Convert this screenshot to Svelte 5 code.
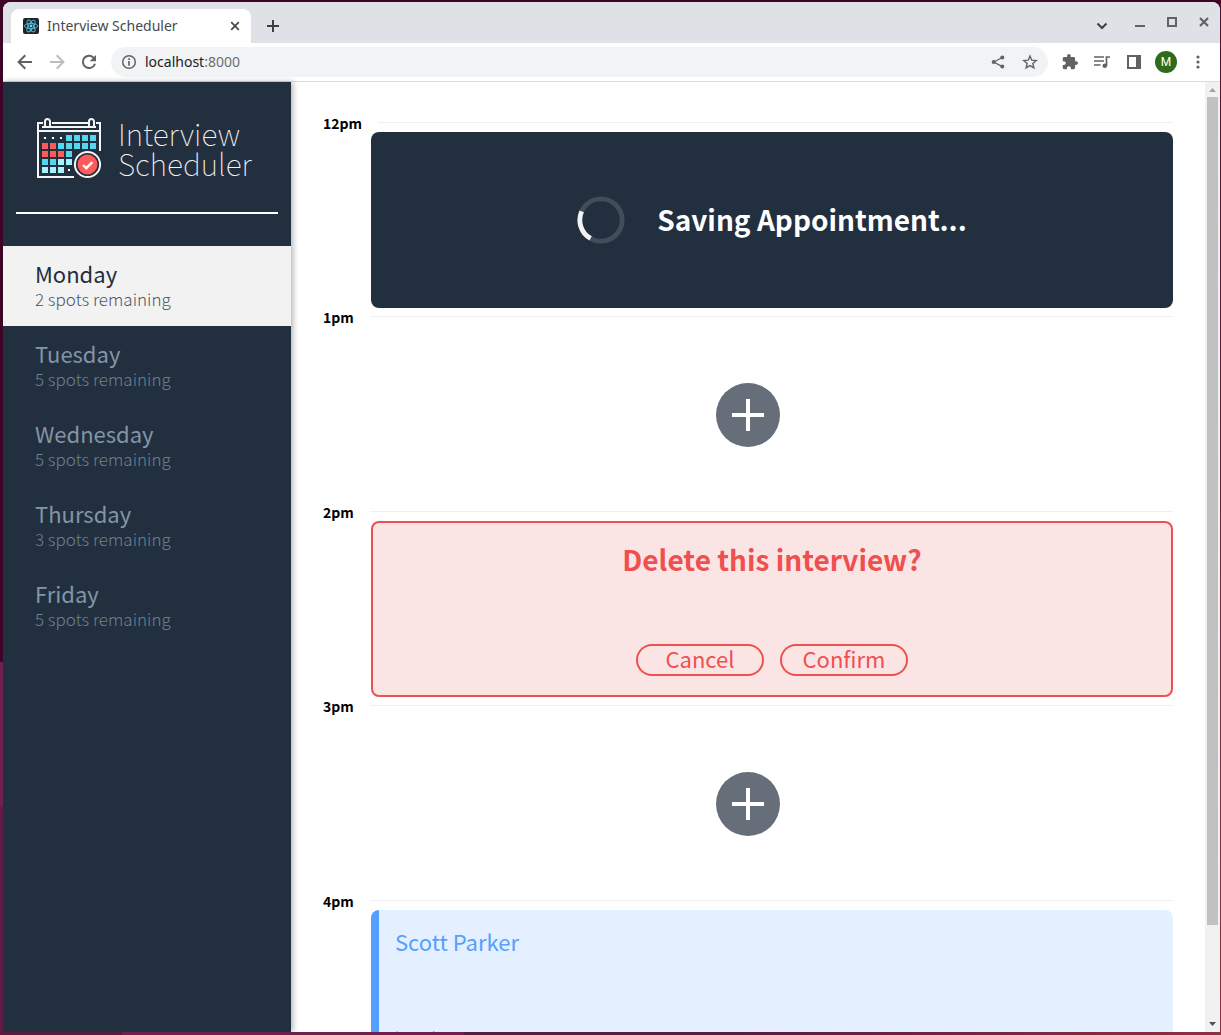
<script>
  const days = [
    { name: 'Monday', spots: 2, selected: true },
    { name: 'Tuesday', spots: 5 },
    { name: 'Wednesday', spots: 5 },
    { name: 'Thursday', spots: 3 },
    { name: 'Friday', spots: 5 }
  ];

  const slots = [
    { time: '12pm', mode: 'saving' },
    { time: '1pm', mode: 'empty' },
    { time: '2pm', mode: 'confirm' },
    { time: '3pm', mode: 'empty' },
    { time: '4pm', mode: 'show', student: 'Scott Parker' }
  ];

  // Calendar cells: w = dot, b = blue, r = red, l = light blue
  const calendar = ['wwwbbbb', 'rrbbbbb', 'rrrb', 'bbll', 'lllw'];
  const cells = calendar.flatMap((row, y) => [...row].map((kind, x) => ({ kind, x: 5 + x * 8, y: 17 + y * 8 })));
  const fills = { b: '#54d8f0', r: '#ff5a5a', l: '#a5f3fb' };
</script>

<div class="window">
  <header class="tabstrip">
    <div class="tab">
      <svg class="favicon" width="16" height="16" viewBox="0 0 16 16" aria-hidden="true">
        <rect width="16" height="16" rx="2" fill="#20232a" />
        <g fill="none" stroke="#53c1de" stroke-width="0.9">
          <ellipse cx="8" cy="8" rx="6.6" ry="2.6" />
          <ellipse cx="8" cy="8" rx="6.6" ry="2.6" transform="rotate(60 8 8)" />
          <ellipse cx="8" cy="8" rx="6.6" ry="2.6" transform="rotate(120 8 8)" />
        </g>
        <circle cx="8" cy="8" r="1.4" fill="#61dafb" />
      </svg>
      <span class="title">Interview Scheduler</span>
      <button class="icon" aria-label="Close tab">
        <svg width="16" height="16" viewBox="0 0 16 16"><path d="M4.2 4.2l7.6 7.6M11.8 4.2l-7.6 7.6" stroke="#44474b" stroke-width="1.7" /></svg>
      </button>
    </div>
    <button class="icon newtab" aria-label="New tab">
      <svg width="16" height="16" viewBox="0 0 16 16"><path d="M8 2v12M2 8h12" stroke="#3c4043" stroke-width="2" /></svg>
    </button>
    <div class="controls">
      <button class="icon search" aria-label="Search tabs">
        <svg width="16" height="16" viewBox="0 0 16 16"><path d="M3.5 5.500L8 10l4.500-4.500" fill="none" stroke="#3c4043" stroke-width="2" /></svg>
      </button>
      <button class="icon" aria-label="Minimize">
        <svg width="16" height="16" viewBox="0 0 16 16"><path d="M3 8h10" stroke="#5f6368" stroke-width="2" /></svg>
      </button>
      <button class="icon raised" aria-label="Maximize">
        <svg width="16" height="16" viewBox="0 0 16 16"><rect x="4" y="4" width="8" height="8" fill="none" stroke="#5f6368" stroke-width="2" /></svg>
      </button>
      <button class="icon raised" aria-label="Close window">
        <svg width="16" height="16" viewBox="0 0 16 16"><path d="M4 4l8 8M12 4l-8 8" stroke="#5f6368" stroke-width="2.200" /></svg>
      </button>
    </div>
  </header>

  <div class="toolbar">
    <button class="icon" aria-label="Back">
      <svg width="16" height="16" viewBox="0 0 16 16"><path d="M15 8H2M8.300 1.300L1.600 8l6.700 6.700" fill="none" stroke="#5f6368" stroke-width="2" /></svg>
    </button>
    <button class="icon" aria-label="Forward">
      <svg width="16" height="16" viewBox="0 0 16 16"><path d="M1 8h13M7.700 1.300L14.400 8l-6.700 6.700" fill="none" stroke="#bbbdbf" stroke-width="2" /></svg>
    </button>
    <button class="icon" aria-label="Reload">
      <svg width="16" height="16" viewBox="0 0 16 16"><path d="M13.300 4.500A6.200 6.200 0 1 0 14 9.700" fill="none" stroke="#5f6368" stroke-width="2" /><path d="M15 1v6.300H8.700z" fill="#5f6368" /></svg>
    </button>
    <div class="omnibox">
      <svg width="16" height="16" viewBox="0 0 16 16" aria-hidden="true">
        <circle cx="8" cy="8" r="6.300" fill="none" stroke="#5f6368" stroke-width="1.500" />
        <path d="M8 7v4.700M8 4.200v1.700" stroke="#5f6368" stroke-width="1.700" />
      </svg>
      <span class="url">localhost<span>:8000</span></span>
      <button class="icon" aria-label="Share">
        <svg width="16" height="16" viewBox="0 0 16 16"><path d="M12.300 3.500L3.800 8l8.500 4.600" fill="none" stroke="#5f6368" stroke-width="1.300" /><g fill="#5f6368"><circle cx="12.300" cy="3.500" r="2" /><circle cx="3.700" cy="8" r="2" /><circle cx="12.300" cy="12.600" r="2" /></g></svg>
      </button>
      <button class="icon" aria-label="Bookmark">
        <svg width="16" height="16" viewBox="0 0 16 16"><path d="M8 2l1.750 4.150 4.500.400-3.420 2.950 1.030 4.400L8 11.550 4.140 13.900l1.030-4.400L1.750 6.550l4.500-.400z" fill="none" stroke="#5f6368" stroke-width="1.400" /></svg>
      </button>
    </div>
    <div class="actions">
      <button class="icon" aria-label="Extensions">
        <svg width="16" height="16" viewBox="1 1 22 22"><path fill="#5f6368" d="M20.500 11H19V7c0-1.100-.900-2-2-2h-4V3.500a2.500 2.500 0 0 0-5 0V5H4c-1.100 0-2 .900-2 2v3.800h1.500c1.500 0 2.700 1.200 2.700 2.700S5 16.200 3.500 16.200H2V20c0 1.100.900 2 2 2h3.800v-1.500c0-1.500 1.200-2.700 2.700-2.700s2.700 1.200 2.700 2.700V22H17c1.100 0 2-.900 2-2v-4h1.500a2.500 2.500 0 0 0 0-5z" /></svg>
      </button>
      <button class="icon" aria-label="Media controls">
        <svg width="16" height="16" viewBox="0 0 16 16"><path d="M0 3h10M0 7h10M0 11h6.500" stroke="#5f6368" stroke-width="1.700" /><circle cx="10.800" cy="11.800" r="2.300" fill="#5f6368" /><path d="M12.500 12V3H16" fill="none" stroke="#5f6368" stroke-width="1.700" /></svg>
      </button>
      <button class="icon" aria-label="Side panel">
        <svg width="16" height="16" viewBox="0 0 16 16"><path d="M2 2h12v12H2z" fill="none" stroke="#5f6368" stroke-width="2" /><path d="M10 2h4v12h-4z" fill="#5f6368" /></svg>
      </button>
      <button class="avatar" aria-label="Profile">M</button>
      <button class="icon" aria-label="Menu">
        <svg width="16" height="16" viewBox="0 0 16 16" fill="#5f6368"><circle cx="8" cy="3" r="1.600" /><circle cx="8" cy="8" r="1.600" /><circle cx="8" cy="13" r="1.600" /></svg>
      </button>
    </div>
  </div>

  <div class="page">
    <aside class="sidebar">
      <div class="logo">
        <svg width="66" height="62" viewBox="0 0 66 62" aria-hidden="true">
          <g fill="none" stroke="#f5f5f5" stroke-width="2">
            <path d="M6 5H1v54h36M15 5h36M59 5h4v28M1 13h62M5 9h54" />
            <path d="M8 8V3.500a2.500 2.500 0 0 1 5 0V9M52 8V3.500a2.500 2.500 0 0 1 5 0V9" />
          </g>
          {#each cells as cell}
            {#if cell.kind === 'w'}
              <rect x={cell.x + 2} y={cell.y + 2} width="2" height="2" fill="#fff" />
            {:else}
              <rect x={cell.x} y={cell.y} width="6" height="6" fill={fills[cell.kind]} />
            {/if}
          {/each}
          <circle cx="50.500" cy="46.500" r="12.600" fill="#222f3e" stroke="#f5f5f5" stroke-width="2" />
          <circle cx="50.500" cy="46.500" r="10" fill="#ff5a5a" />
          <path d="M46 47l3.300 3.200 6-6" fill="none" stroke="#fff" stroke-width="2.400" />
        </svg>
        <span class="brand">Interview<br />Scheduler</span>
      </div>
      <hr class="divider" />
      <nav>
        {#each days as day}
          <button class="day" class:selected={day.selected}>
            <span class="name">{day.name}</span>
            <span class="spots">{day.spots} spots remaining</span>
          </button>
        {/each}
      </nav>
    </aside>

    <main>
      {#each slots as slot}
        <section class="slot">
          <header class="time"><h4>{slot.time}</h4><hr /></header>
          {#if slot.mode === 'saving'}
            <div class="card saving">
              <svg width="48" height="48" viewBox="0 0 50 50" aria-hidden="true">
                <circle cx="25" cy="25" r="22" fill="none" stroke="#414d59" stroke-width="5" />
                <path d="M4.900 16A22 22 0 0 0 14.200 44.200" fill="none" stroke="#f2f2f2" stroke-width="5" />
              </svg>
              <h1>Saving Appointment...</h1>
            </div>
          {:else if slot.mode === 'empty'}
            <div class="empty">
              <button class="add" aria-label="Add appointment">
                <svg width="64" height="64" viewBox="0 0 64 64"><path d="M32 16v32M16 32h32" stroke="#fff" stroke-width="4" /></svg>
              </button>
            </div>
          {:else if slot.mode === 'confirm'}
            <div class="card confirm">
              <h1>Delete this interview?</h1>
              <div class="choices">
                <button>Cancel</button>
                <button>Confirm</button>
              </div>
            </div>
          {:else}
            <div class="card show">
              <h2>{slot.student}</h2>
              <h4>Interviewer</h4>
            </div>
          {/if}
        </section>
      {/each}
    </main>

    <div class="scrollbar" aria-hidden="true">
      <svg width="15" height="15" viewBox="0 0 15 15"><path d="M4 10l3.500-4L11 10z" fill="#a3a3a3" /></svg>
      <div class="track"><div class="thumb"></div></div>
      <svg width="15" height="15" viewBox="0 0 15 15"><path d="M4 5l3.500 4L11 5z" fill="#505050" /></svg>
    </div>
  </div>
</div>

<style>
  :global(body) {
    background:
      linear-gradient(90deg, #5c1a42 0 10%, #70204f 10% 38%, #5a1a40 38% 60%, #8f3040) bottom / 100% 3px no-repeat,
      linear-gradient(#3d0428 0 64%, #70204f 64% 78%, #5f1b43 78%) left / 3px 100% no-repeat,
      linear-gradient(#4a1230, #8f3040) right / 1px 100% no-repeat,
      #3f0528;
  }
  :global(#app) {
    box-sizing: border-box;
    height: 100vh;
    padding: 2px 1px 3px 3px;
  }
  * {
    box-sizing: border-box;
  }
  button {
    padding: 0;
    border: 0;
    background: none;
    color: inherit;
    font: inherit;
    cursor: pointer;
  }
  h1, h2, h4 {
    margin: 0;
  }
  svg {
    display: block;
    flex: none;
  }
  .window {
    display: flex;
    flex-direction: column;
    height: 100%;
    overflow: hidden;
    border-radius: 8px 8px 0 0;
    background: #fff;
    font-family: "Noto Sans CJK SC", "Noto Sans", sans-serif;
  }

  .tabstrip {
    display: flex;
    align-items: center;
    height: 41px;
    padding: 7px 8px 0;
    background: #dee1e6;
    font-family: "Noto Sans", sans-serif;
  }
  .tab {
    display: flex;
    align-items: center;
    gap: 8px;
    width: 240px;
    height: 34px;
    padding: 0 8px 0 12px;
    border-radius: 8px 8px 0 0;
    background: #fff;
  }
  .title {
    flex: 1;
    color: #45494d;
    font-size: 14px;
    line-height: 20px;
    white-space: nowrap;
  }
  .newtab {
    margin-left: 14px;
  }
  .controls {
    display: flex;
    gap: 16px;
    margin-left: auto;
  }
  .search {
    margin-right: 6px;
  }
  .raised {
    margin-top: -4px;
    margin-bottom: 4px;
  }

  .toolbar {
    display: flex;
    align-items: center;
    gap: 16px;
    height: 39px;
    padding: 0 14px;
    border-bottom: 1px solid #dadce0;
    font-family: "Noto Sans", sans-serif;
  }
  .omnibox {
    display: flex;
    flex: 1;
    align-items: center;
    gap: 16px;
    height: 30px;
    margin-left: -2px;
    padding: 0 10px;
    border-radius: 15px;
    background: #f1f3f4;
  }
  .url {
    flex: 1;
    margin-left: -8px;
    color: #202124;
    font-size: 14px;
    line-height: 20px;
  }
  .url span {
    color: #6a6e73;
  }
  .actions {
    display: flex;
    align-items: center;
    gap: 16px;
    margin-left: -2px;
  }
  .avatar {
    width: 22px;
    height: 22px;
    margin: 0 -3px;
    border-radius: 50%;
    background: #2f6b1c;
    color: #fff;
    font: 12px/22px Roboto, sans-serif;
  }

  .page {
    display: flex;
    flex: 1;
    min-height: 0;
  }
  .sidebar {
    z-index: 1;
    display: flex;
    flex: none;
    flex-direction: column;
    width: 288px;
    background: #222f3e;
    box-shadow: 2px 0 6px rgba(0, 0, 0, 0.3);
  }
  .logo {
    display: flex;
    gap: 15px;
    padding: 36px 16px 0 34px;
  }
  .brand {
    color: #f2f2f2;
    font-size: 30px;
    font-weight: 100;
    line-height: 30px;
  }
  .divider {
    width: 262px;
    height: 2px;
    margin: 32px 13px;
    border: 0;
    background: #fff;
  }
  .day {
    display: flex;
    flex-direction: column;
    justify-content: center;
    gap: 2px;
    width: 100%;
    height: 80px;
    padding: 0 32px;
    color: #8395a7;
    text-align: left;
  }
  .name {
    font-size: 22px;
    line-height: 24px;
  }
  .spots {
    font-size: 17px;
    font-weight: 300;
    line-height: 24px;
    opacity: 0.8;
  }
  .selected {
    background: #f2f2f2;
    color: #222f3e;
  }

  main {
    flex: 1;
    min-width: 0;
    overflow: hidden;
    padding: 32px 32px 0;
  }
  .time {
    display: flex;
    align-items: center;
    gap: 16px;
    font-size: 14px;
    line-height: 1.32;
  }
  .time h4 {
    font-weight: 700;
  }
  .time hr {
    flex: 1;
    height: 1px;
    margin: 0 0 2px;
    border: 0;
    background: #f0f0f0;
  }
  .card {
    height: 176px;
    margin-left: 48px;
    border-radius: 8px;
  }
  .card h1 {
    padding-bottom: 2px;
    font-size: 28px;
    font-weight: 700;
    line-height: 34px;
  }
  .saving {
    display: flex;
    align-items: center;
    justify-content: center;
    gap: 32px;
    background: #222f3e;
    color: #fff;
  }
  .empty {
    display: flex;
    align-items: center;
    justify-content: center;
    height: 176px;
  }
  .add {
    overflow: hidden;
    border-radius: 50%;
    background: #666e79;
  }
  .confirm {
    display: flex;
    flex-direction: column;
    align-items: center;
    justify-content: space-between;
    padding: 19px;
    border: 2px solid #f04f50;
    background: #fbe5e4;
    color: #f04f50;
  }
  .choices {
    display: flex;
    gap: 16px;
  }
  .choices button {
    width: 128px;
    height: 32px;
    padding-bottom: 4px;
    border: 2px solid #f04f50;
    border-radius: 16px;
    font-size: 22px;
    line-height: 24px;
  }
  .show {
    display: flex;
    flex-direction: column;
    justify-content: space-between;
    padding: 16px;
    padding-bottom: 42px;
    border-left: 8px solid #54a0ff;
    background: #e4f0ff;
    color: #54a0ff;
  }
  .show h2 {
    font-size: 22px;
    font-weight: 400;
    line-height: 30px;
  }
  .show h4 {
    font-size: 14px;
    font-weight: 300;
    line-height: 16px;
  }

  .scrollbar {
    display: flex;
    flex: none;
    flex-direction: column;
    width: 15px;
    background: #f1f1f1;
  }
  .track {
    flex: 1;
  }
  .thumb {
    height: 90%;
    margin: 0 2px;
    background: #c1c1c1;
  }
</style>
